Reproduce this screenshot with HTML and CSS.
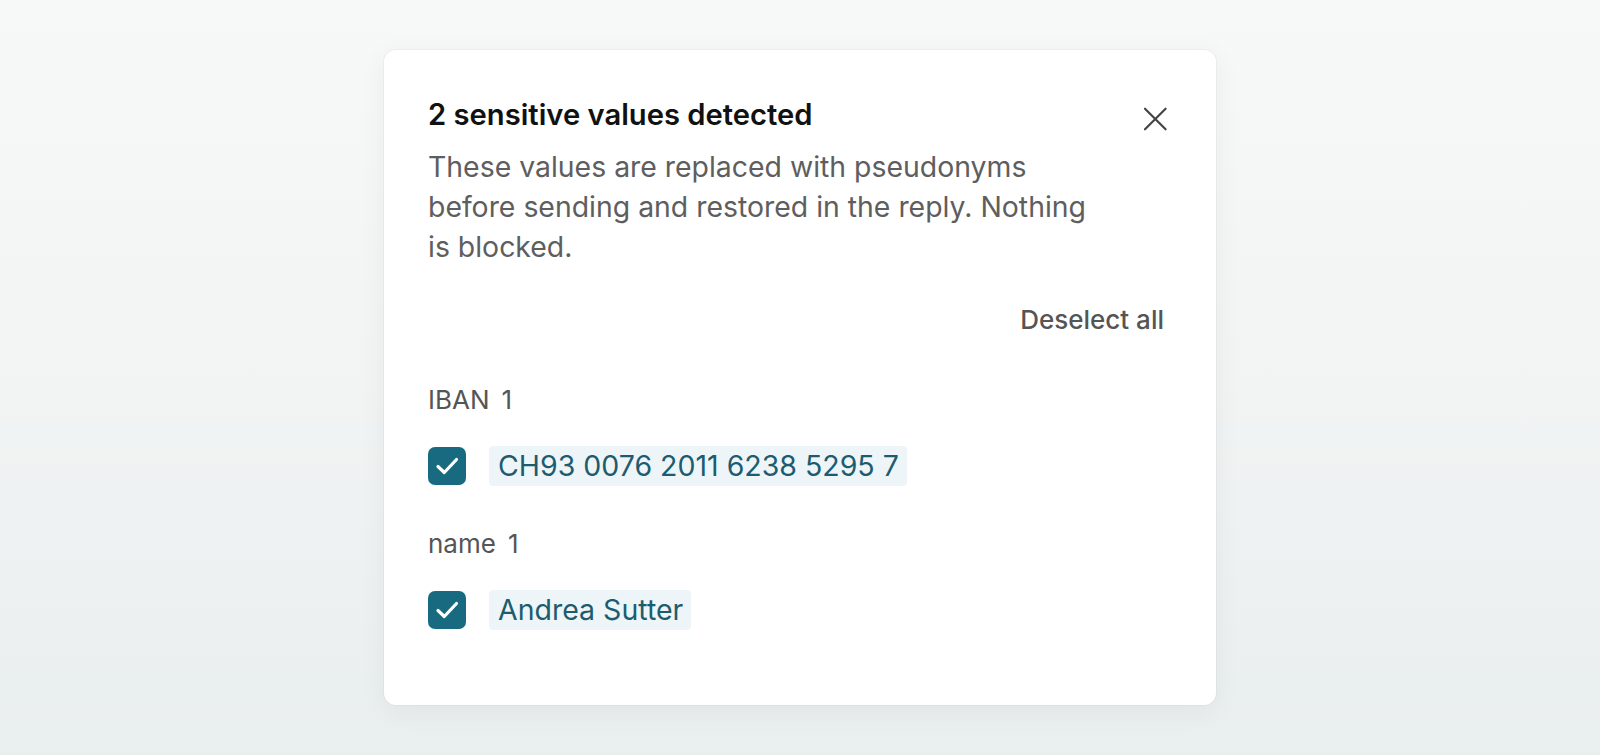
FILE: index.html
```html
<!DOCTYPE html>
<html lang="en">
<head>
<meta charset="utf-8">
<title>Sensitive values detected</title>
<link rel="stylesheet" href="styles.css">
</head>
<body>
<main class="stage">
  <section class="card" role="dialog" aria-labelledby="dlg-title">
    <header class="header">
      <div class="header-text">
        <h2 class="title" id="dlg-title">2 sensitive values detected</h2>
        <p class="desc">These values are replaced with pseudonyms before sending and restored in the reply. Nothing is blocked.</p>
      </div>
      <button class="close" type="button" aria-label="Close">
        <svg viewBox="0 0 34 34" width="34" height="34" aria-hidden="true"><path d="M7 6.7 L27.6 27.3 M27.6 6.7 L7 27.3" stroke="#454545" stroke-width="2.2" stroke-linecap="round" fill="none"/></svg>
      </button>
    </header>
    <div class="actions">
      <button class="link-btn" type="button">Deselect all</button>
    </div>
    <div class="group">
      <div class="group-label"><span>IBAN</span><span>1</span></div>
      <label class="item">
        <span class="check"><svg viewBox="0 0 38 38" width="38" height="38" aria-hidden="true"><path d="M10 19.5 L16.3 25.5 L28.5 12.5" stroke="#fff" stroke-width="3.2" stroke-linecap="round" stroke-linejoin="round" fill="none"/></svg></span>
        <span class="chip">CH93 0076 2011 6238 5295 7</span>
      </label>
    </div>
    <div class="group">
      <div class="group-label"><span>name</span><span>1</span></div>
      <label class="item">
        <span class="check"><svg viewBox="0 0 38 38" width="38" height="38" aria-hidden="true"><path d="M10 19.5 L16.3 25.5 L28.5 12.5" stroke="#fff" stroke-width="3.2" stroke-linecap="round" stroke-linejoin="round" fill="none"/></svg></span>
        <span class="chip">Andrea Sutter</span>
      </label>
    </div>
  </section>
</main>
</body>
</html>
```

FILE: styles.css
```css
* { box-sizing: border-box; }
html, body { margin: 0; padding: 0; }
body {
  font-family: Inter, "Noto Sans", "Liberation Sans", sans-serif;
  background: linear-gradient(180deg, #f7f8f8 0%, #f2f4f4 50%, #e9eeee 100%);
  min-height: 100vh;
}
.stage {
  height: 755px;
  display: flex;
  align-items: center;
  justify-content: center;
}
.card {
  width: 832px;
  background: #fff;
  border-radius: 12px;
  padding: 48px 44px 75px 44px;
  box-shadow: 0 0 0 1px rgba(20, 40, 40, 0.03), 0 6px 28px rgba(20, 40, 40, 0.05);
}
.header {
  display: flex;
  justify-content: space-between;
  align-items: flex-start;
}
.title {
  margin: 0;
  font-size: 29.2px;
  line-height: 33px;
  font-weight: 600;
  color: #111;
}
.desc {
  margin: 16px 0 0 0;
  font-size: 28.4px;
  line-height: 40px;
  color: #5e5e5e;
  max-width: 668px;
}
.close {
  margin-top: 4px;
  width: 34px;
  height: 34px;
  padding: 0;
  border: 0;
  background: transparent;
  display: flex;
}
.actions {
  display: flex;
  justify-content: flex-end;
  margin-top: 31px;
}
.link-btn {
  font-family: inherit;
  font-size: 26px;
  line-height: 32px;
  font-weight: 500;
  color: #555;
  background: transparent;
  border: 0;
  padding: 6px 8px 6px 10px;
}
.group { margin-top: 42px; }
.group-label {
  display: flex;
  gap: 12px;
  font-size: 26px;
  line-height: 32px;
  color: #555;
}
.item {
  margin-top: 30px;
  display: flex;
  align-items: center;
  gap: 23px;
  height: 40px;
}
.check {
  width: 38px;
  height: 38px;
  border-radius: 7px;
  background: #186a80;
  display: flex;
}
.chip {
  height: 40px;
  padding: 0 8px 0 9px;
  border-radius: 4px;
  background: #eef5f8;
  color: #1d5c6f;
  font-size: 28.5px;
  line-height: 40px;
}
```
